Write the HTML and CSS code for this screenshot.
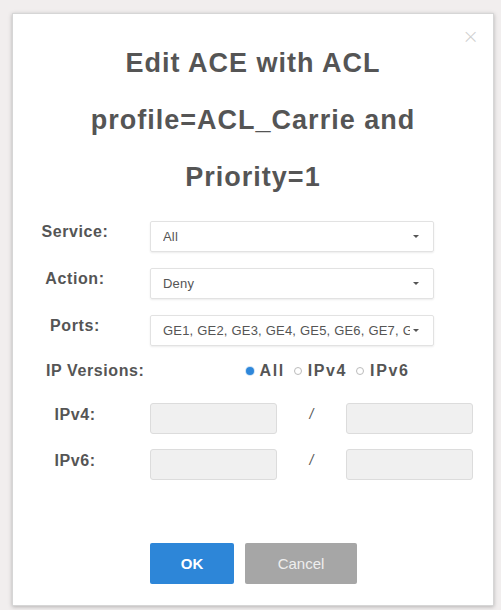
FILE: index.html
```html
<!DOCTYPE html>
<html lang="en">
<head>
    <meta charset="UTF-8">
    <meta name="viewport" content="width=device-width, initial-scale=1.0">
    <title>Edit ACE</title>
    <link rel="stylesheet" href="styles.css">
</head>
<body>
    <div class="modal">
        <button class="modal-close" aria-label="Close">&times;</button>

        <h1 class="modal-title">Edit ACE with ACL profile=ACL_Carrie and Priority=1</h1>

        <form class="ace-form">
            <div class="form-row">
                <label class="form-label">Service:</label>
                <div class="select-box">
                    <span class="select-value">All</span>
                    <span class="caret"></span>
                </div>
            </div>

            <div class="form-row">
                <label class="form-label">Action:</label>
                <div class="select-box">
                    <span class="select-value">Deny</span>
                    <span class="caret"></span>
                </div>
            </div>

            <div class="form-row">
                <label class="form-label">Ports:</label>
                <div class="select-box">
                    <span class="select-value">GE1, GE2, GE3, GE4, GE5, GE6, GE7, GE8</span>
                    <span class="caret"></span>
                </div>
            </div>

            <div class="form-row ip-versions">
                <label class="form-label">IP Versions:</label>
                <div class="radio-group">
                    <span class="radio checked"></span><span class="radio-text">All</span>
                    <span class="radio"></span><span class="radio-text">IPv4</span>
                    <span class="radio"></span><span class="radio-text">IPv6</span>
                </div>
            </div>

            <div class="form-row addr-row">
                <label class="form-label">IPv4:</label>
                <div class="addr-fields">
                    <input class="addr-input" type="text" disabled>
                    <span class="slash">/</span>
                    <input class="addr-input" type="text" disabled>
                </div>
            </div>

            <div class="form-row addr-row">
                <label class="form-label">IPv6:</label>
                <div class="addr-fields">
                    <input class="addr-input" type="text" disabled>
                    <span class="slash">/</span>
                    <input class="addr-input" type="text" disabled>
                </div>
            </div>
        </form>

        <div class="modal-actions">
            <button class="btn btn-primary">OK</button>
            <button class="btn btn-cancel">Cancel</button>
        </div>
    </div>
</body>
</html>
```

FILE: styles.css
```css
* {
    margin: 0;
    padding: 0;
    box-sizing: border-box;
}

body {
    font-family: "Liberation Sans", Arial, sans-serif;
    background: #f1eeee;
    color: #555;
    padding: 13px 7px 4px 12px;
}

/* Dialog */
.modal {
    position: relative;
    width: 482px;
    height: 593px;
    background: #fff;
    border: 1px solid #d6d6d6;
    box-shadow: 0 1px 4px rgba(0, 0, 0, 0.25);
    padding-top: 21px;
}

.modal-close {
    position: absolute;
    top: 10px;
    right: 14px;
    background: none;
    border: none;
    font-family: "DejaVu Sans", sans-serif;
    font-size: 20px;
    font-weight: 300;
    color: #d0d0d0;
    cursor: pointer;
}

.modal-title {
    width: 350px;
    margin: 0 auto;
    text-align: center;
    font-size: 27px;
    font-weight: bold;
    letter-spacing: 1px;
    line-height: 57px;
    color: #555;
}

/* Form */
.ace-form {
    margin-top: 15px;
    display: flex;
    flex-direction: column;
    gap: 16px;
}

.form-row {
    display: flex;
    align-items: center;
    height: 31px;
}

.form-label {
    width: 86px;
    margin-left: 19px;
    margin-right: 32px;
    text-align: center;
    font-size: 16px;
    font-weight: bold;
    letter-spacing: 0.6px;
    color: #555;
    position: relative;
    top: -5px;
}

.select-box {
    width: 284px;
    height: 31px;
    border: 1px solid #e2e2e2;
    border-radius: 2px;
    box-shadow: 0 1px 2px rgba(0, 0, 0, 0.08);
    display: flex;
    align-items: center;
    padding: 0 14px 0 12px;
    overflow: hidden;
}

.select-value {
    flex: 1;
    min-width: 0;
    font-size: 13px;
    letter-spacing: 0.2px;
    color: #555;
    white-space: nowrap;
    overflow: hidden;
}

.caret {
    width: 0;
    height: 0;
    margin-left: 3px;
    border-left: 3px solid transparent;
    border-right: 3px solid transparent;
    border-top: 3px solid #555;
}

/* IP version radios */
.ip-versions {
    height: 22px;
    margin-top: -2px;
}

.ip-versions .form-label {
    width: auto;
    margin-left: 33px;
    margin-right: 0;
    text-align: left;
    top: 0;
}

.radio-group {
    margin-left: 101px;
    display: flex;
    align-items: center;
    font-size: 16px;
    font-weight: bold;
    letter-spacing: 1.6px;
    color: #555;
}

.radio {
    width: 8px;
    height: 8px;
    border: 1px solid #bbb;
    border-radius: 50%;
    margin-right: 6px;
}

.radio.checked {
    border: none;
    background: #2e87da;
    box-shadow: 0 0 0 1px #cfe3f6;
}

.radio-text {
    margin-right: 9px;
}

/* Address inputs */
.addr-row {
    margin-top: 5px;
}

.addr-row + .addr-row {
    margin-top: -1px;
}

.addr-row .form-label {
    top: -4px;
}

.addr-fields {
    display: flex;
    align-items: center;
}

.addr-input {
    width: 127px;
    height: 31px;
    border: 1px solid #dcdcdc;
    border-radius: 3px;
    background: #f0f0f0;
}

.slash {
    width: 69px;
    text-align: center;
    font-size: 14px;
    font-style: italic;
    color: #555;
    position: relative;
    top: -5px;
}

/* Buttons */
.modal-actions {
    margin-top: 63px;
    margin-left: 137px;
    display: flex;
    gap: 11px;
}

.btn {
    height: 41px;
    border: none;
    border-radius: 2px;
    font-family: "Liberation Sans", Arial, sans-serif;
    font-size: 15px;
    color: #fff;
    cursor: pointer;
}

.btn-primary {
    width: 84px;
    background: #2d86d8;
    font-weight: bold;
}

.btn-cancel {
    width: 112px;
    background: #a6a6a6;
    color: #eee;
}
```
